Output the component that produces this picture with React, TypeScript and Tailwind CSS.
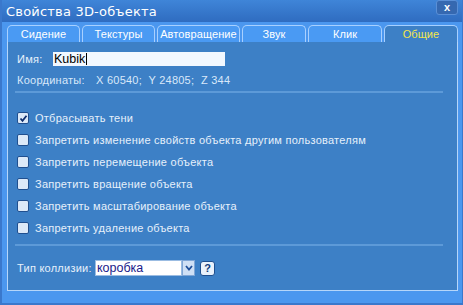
import React from "react";

const tabs = [
  { label: "Сидение", w: "w-[73px]" },
  { label: "Текстуры", w: "w-[73px]" },
  { label: "Автовращение", w: "w-[83px]" },
  { label: "Звук", w: "w-[64px]" },
  { label: "Клик", w: "w-[74px]" },
];

const checks = [
  { label: "Отбрасывать тени", on: true },
  { label: "Запретить изменение свойств объекта другим пользователям", on: false },
  { label: "Запретить перемещение объекта", on: false },
  { label: "Запретить вращение объекта", on: false },
  { label: "Запретить масштабирование объекта", on: false },
  { label: "Запретить удаление объекта", on: false },
];

function Box({ on }: { on: boolean }) {
  return (
    <div className="w-[12px] h-[12px] rounded-[2px] border border-[#1f4f8f] bg-[#dce9f8] flex items-center justify-center shrink-0">
      {on && (
        <svg width="9" height="9" viewBox="0 0 9 9">
          <path d="M1.5 4.5 L3.5 6.8 L7.5 1.8" stroke="#0f2f6e" strokeWidth="1.8" fill="none" />
        </svg>
      )}
    </div>
  );
}

export default function App() {
  return (
    <div
      className="w-[463px] h-[305px] bg-[#4b97ef] flex flex-col overflow-hidden border-l-2 border-b-2 border-r border-[#3a78cc]"
      style={{ fontFamily: '"Liberation Sans", Arial, sans-serif' }}
    >
      {/* title bar */}
      <div className="h-[22px] shrink-0 flex items-center justify-between pl-[4px] pr-[4px] bg-gradient-to-b from-[#3f85d8] to-[#2f6cc0]">
        <span
          className="text-white text-[13px] leading-none tracking-[0.2px]"
          style={{ fontFamily: '"DejaVu Sans", Verdana, sans-serif' }}
        >
          Свойства 3D-объекта
        </span>
        <div className="w-[22px] h-[15px] -mt-[7px] rounded-[3px] bg-[#3568b0] border border-[#5a8fd6] flex items-center justify-center text-white text-[11px] font-bold leading-none">
          x
        </div>
      </div>

      {/* tabs */}
      <div className="flex items-end gap-[2px] pl-[5px] mt-[3px] h-[17px] shrink-0">
        {tabs.map((t) => (
          <div
            key={t.label}
            className={`${t.w} h-[17px] rounded-t-[5px] border border-b-0 border-[#a8d0ff] bg-[#4a9af3] text-white text-[11px] tracking-[0.1px] leading-none flex items-center justify-center whitespace-nowrap`}
          >
            {t.label}
          </div>
        ))}
        <div className="w-[74px] h-[17px] rounded-t-[5px] border border-b-0 border-[#a8d0ff] bg-[#3d80c6] text-[#f3e64a] text-[11px] tracking-[0.1px] leading-none flex items-center justify-center">
          Общие
        </div>
      </div>

      {/* panel */}
      <div className="ml-[5px] mr-[4px] h-[249px] shrink-0 bg-[#3d80c6] border-l border-r border-b border-[#b6d6fa] pl-[9px] pr-[14px] flex flex-col text-[11px] tracking-[0.25px] text-[#e6f0fb]">
        <div className="flex items-center h-[16px] mt-[9px]">
          <span className="w-[36px]">Имя:</span>
          <div className="w-[172px] h-[14px] bg-[#f2f8ff] flex items-center pl-[1px] text-black text-[12.5px] tracking-normal leading-none">
            Kubik<span className="w-px h-[12px] bg-black ml-px" />
          </div>
        </div>
        <div className="flex items-center h-[14px] mt-[6px] whitespace-pre text-[#d9e8fa]">
          <span className="w-[79px]">Координаты:</span>
          <span>X 60540;  Y 24805;  Z 344</span>
        </div>
        <div className="h-[2px] bg-[#5d9ad8] mt-[4px] -ml-[2px]" />

        <div className="flex flex-col mt-[19px] gap-[10px]">
          {checks.map((c) => (
            <div key={c.label} className="flex items-center gap-[6px] h-[12px] whitespace-nowrap">
              <Box on={c.on} />
              <span className="leading-none">{c.label}</span>
            </div>
          ))}
        </div>

        <div className="h-[2px] bg-[#5d9ad8] mt-[10px] -ml-[2px]" />

        <div className="flex items-center mt-[14px] h-[16px]">
          <span className="w-[78px] whitespace-nowrap text-[#e6f0fb]">Тип коллизии:</span>
          <div className="w-[87px] h-[16px] bg-white border border-[#9bbce2] flex items-center pl-[1px] text-[#1a1a8a] text-[12.5px] tracking-normal leading-none">
            коробка
          </div>
          <div className="w-[13px] h-[16px] bg-[#cfe0f5] border border-[#7fa6d6] flex items-center justify-center">
            <svg width="8" height="6" viewBox="0 0 8 6">
              <path d="M1 1 L4 4.5 L7 1" stroke="#1f4f9a" strokeWidth="1.8" fill="none" />
            </svg>
          </div>
          <div className="ml-[5px] w-[15px] h-[15px] rounded-[3px] bg-[#eaf2fc] border border-[#1f4f8f] flex items-center justify-center text-[#103a7a] text-[11px] font-bold tracking-normal leading-none">
            ?
          </div>
        </div>
      </div>
    </div>
  );
}
